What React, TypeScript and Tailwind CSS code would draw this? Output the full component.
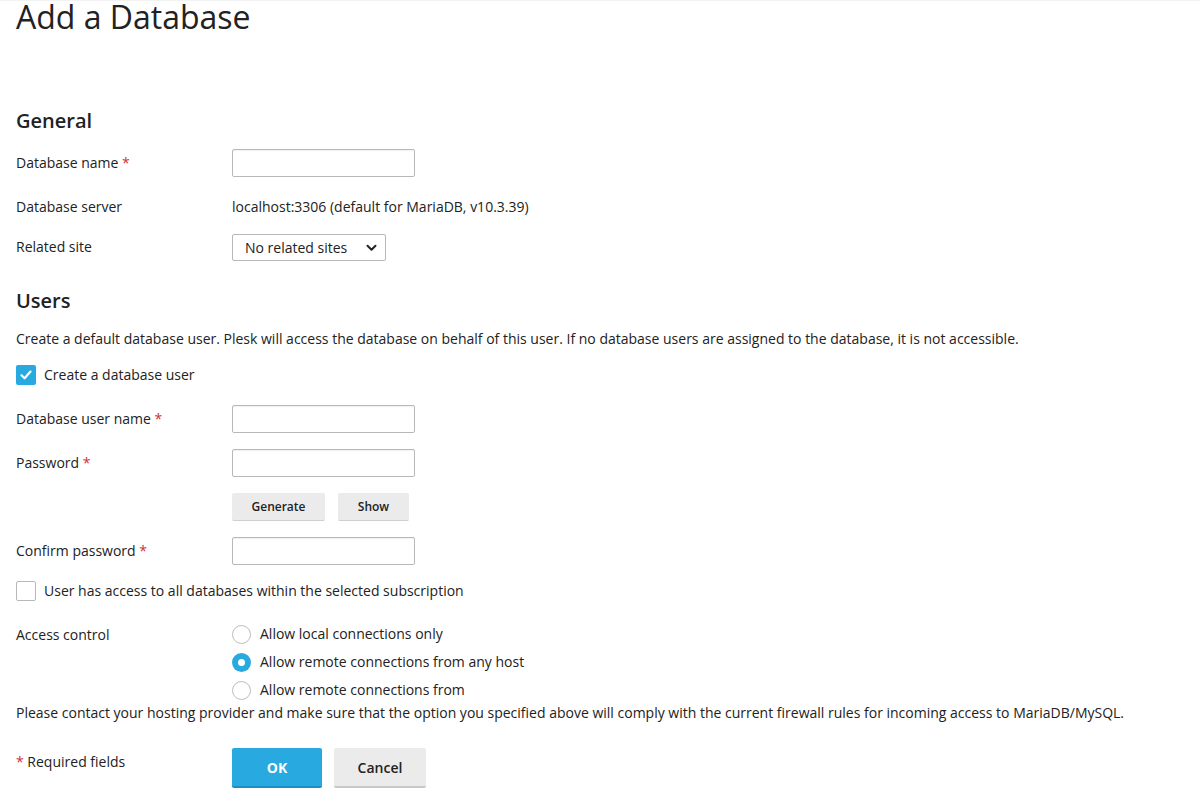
import React from "react";

const Req = () => <span className="text-[#d02d3b]"> *</span>;

function Input() {
  return (
    <div className="h-[28px] w-[183px] rounded-[2px] border border-[#b8b8b8] bg-white shadow-[inset_0_1px_1px_rgba(0,0,0,0.06)]" />
  );
}

function Label({ children, pt = "pt-[4px]" }: { children: React.ReactNode; pt?: string }) {
  return <div className={`w-[216px] shrink-0 leading-[20px] ${pt}`}>{children}</div>;
}

function Checkbox({ checked }: { checked?: boolean }) {
  return checked ? (
    <div className="flex h-[20px] w-[20px] items-center justify-center rounded-[2px] bg-[#28aae1]">
      <svg width="14" height="14" viewBox="0 0 14 14" fill="none">
        <path d="M2.5 7.2 L5.6 10.2 L11.5 3.6" stroke="white" strokeWidth="2.2" strokeLinecap="round" strokeLinejoin="round" />
      </svg>
    </div>
  ) : (
    <div className="h-[20px] w-[20px] rounded-[2px] border border-[#b8b8b8] bg-white" />
  );
}

function Radio({ checked, label }: { checked?: boolean; label: string }) {
  return (
    <div className="flex h-[20px] items-center gap-[9px]">
      {checked ? (
        <div className="flex h-[19px] w-[19px] items-center justify-center rounded-full bg-[#28aae1]">
          <div className="h-[7px] w-[7px] rounded-full bg-white" />
        </div>
      ) : (
        <div className="h-[19px] w-[19px] rounded-full border border-[#bdbdbd] bg-white" />
      )}
      <span className="leading-[20px]">{label}</span>
    </div>
  );
}

export default function App() {
  return (
    <div
      className="min-h-[804px] w-[1200px] border-t border-[#f2f2f2] bg-white px-4 text-[14px] text-[#222222]"
      style={{ fontFamily: '"Open Sans", "Liberation Sans", sans-serif' }}
    >
      <h1 className="-mt-[2px] h-[36px] text-[32px] font-normal leading-[36px] text-[#222222]">Add a Database</h1>

      <h2 className="mt-[72px] h-[28px] text-[20px] font-semibold leading-[28px]">General</h2>

      <div className="mt-[14px] flex items-start">
        <Label>
          Database name<Req />
        </Label>
        <Input />
      </div>

      <div className="mt-[20px] flex items-start">
        <Label pt="pt-0">Database server</Label>
        <div className="leading-[20px]">localhost:3306 (default for MariaDB, v10.3.39)</div>
      </div>

      <div className="mt-[17px] flex items-start">
        <Label pt="pt-[3px]">Related site</Label>
        <div className="flex h-[27px] w-[154px] items-center justify-between rounded-[2px] border border-[#b8b8b8] bg-white pl-[12px] pr-[8px]">
          <span className="leading-[20px]">No related sites</span>
          <svg width="11" height="8" viewBox="0 0 11 8" fill="none">
            <path d="M1.5 1.8 L5.5 5.8 L9.5 1.8" stroke="#222" strokeWidth="2" strokeLinecap="round" strokeLinejoin="round" />
          </svg>
        </div>
      </div>

      <h2 className="mt-[26px] h-[28px] text-[20px] font-semibold leading-[28px]">Users</h2>

      <p className="mt-[14px] leading-[20px]">
        Create a default database user. Plesk will access the database on behalf of this user. If no database users are
        assigned to the database, it is not accessible.
      </p>

      <div className="mt-[16px] flex items-center gap-[8px]">
        <Checkbox checked />
        <span className="leading-[20px]">Create a database user</span>
      </div>

      <div className="mt-[20px] flex items-start">
        <Label>
          Database user name<Req />
        </Label>
        <Input />
      </div>

      <div className="mt-[16px] flex items-start">
        <Label>
          Password<Req />
        </Label>
        <Input />
      </div>

      <div className="mt-[16px] flex items-start">
        <div className="w-[216px] shrink-0" />
        <div className="flex gap-[13px]">
          <button className="h-[28px] w-[93px] rounded-[2px] border-b border-[#cfcfcf] bg-[#ebebeb] text-[12px] font-semibold text-[#222]">
            Generate
          </button>
          <button className="h-[28px] w-[71px] rounded-[2px] border-b border-[#cfcfcf] bg-[#ebebeb] text-[12px] font-semibold text-[#222]">
            Show
          </button>
        </div>
      </div>

      <div className="mt-[16px] flex items-start">
        <Label>
          Confirm password<Req />
        </Label>
        <Input />
      </div>

      <div className="mt-[16px] flex items-center gap-[8px]">
        <Checkbox />
        <span className="leading-[20px]">User has access to all databases within the selected subscription</span>
      </div>

      <div className="mt-[23px] flex items-start">
        <Label pt="pt-[1px]">Access control</Label>
        <div className="flex flex-col gap-[8px]">
          <Radio label="Allow local connections only" />
          <Radio checked label="Allow remote connections from any host" />
          <Radio label="Allow remote connections from" />
        </div>
      </div>

      <p className="mt-[3px] leading-[20px]">
        Please contact your hosting provider and make sure that the option you specified above will comply with the current
        firewall rules for incoming access to MariaDB/MySQL.
      </p>

      <div className="mt-[25px] flex items-start">
        <Label>
          <span className="text-[#d02d3b]">* </span>Required fields
        </Label>
        <div className="flex gap-[12px]">
          <button className="h-[40px] w-[90px] rounded-[2px] border-b-2 border-[#1e8fc0] bg-[#28aae1] text-[14px] font-bold text-white">
            OK
          </button>
          <button className="h-[40px] w-[92px] rounded-[2px] border-b-2 border-[#c8c8c8] bg-[#ebebeb] text-[14px] font-semibold text-[#222]">
            Cancel
          </button>
        </div>
      </div>
    </div>
  );
}
